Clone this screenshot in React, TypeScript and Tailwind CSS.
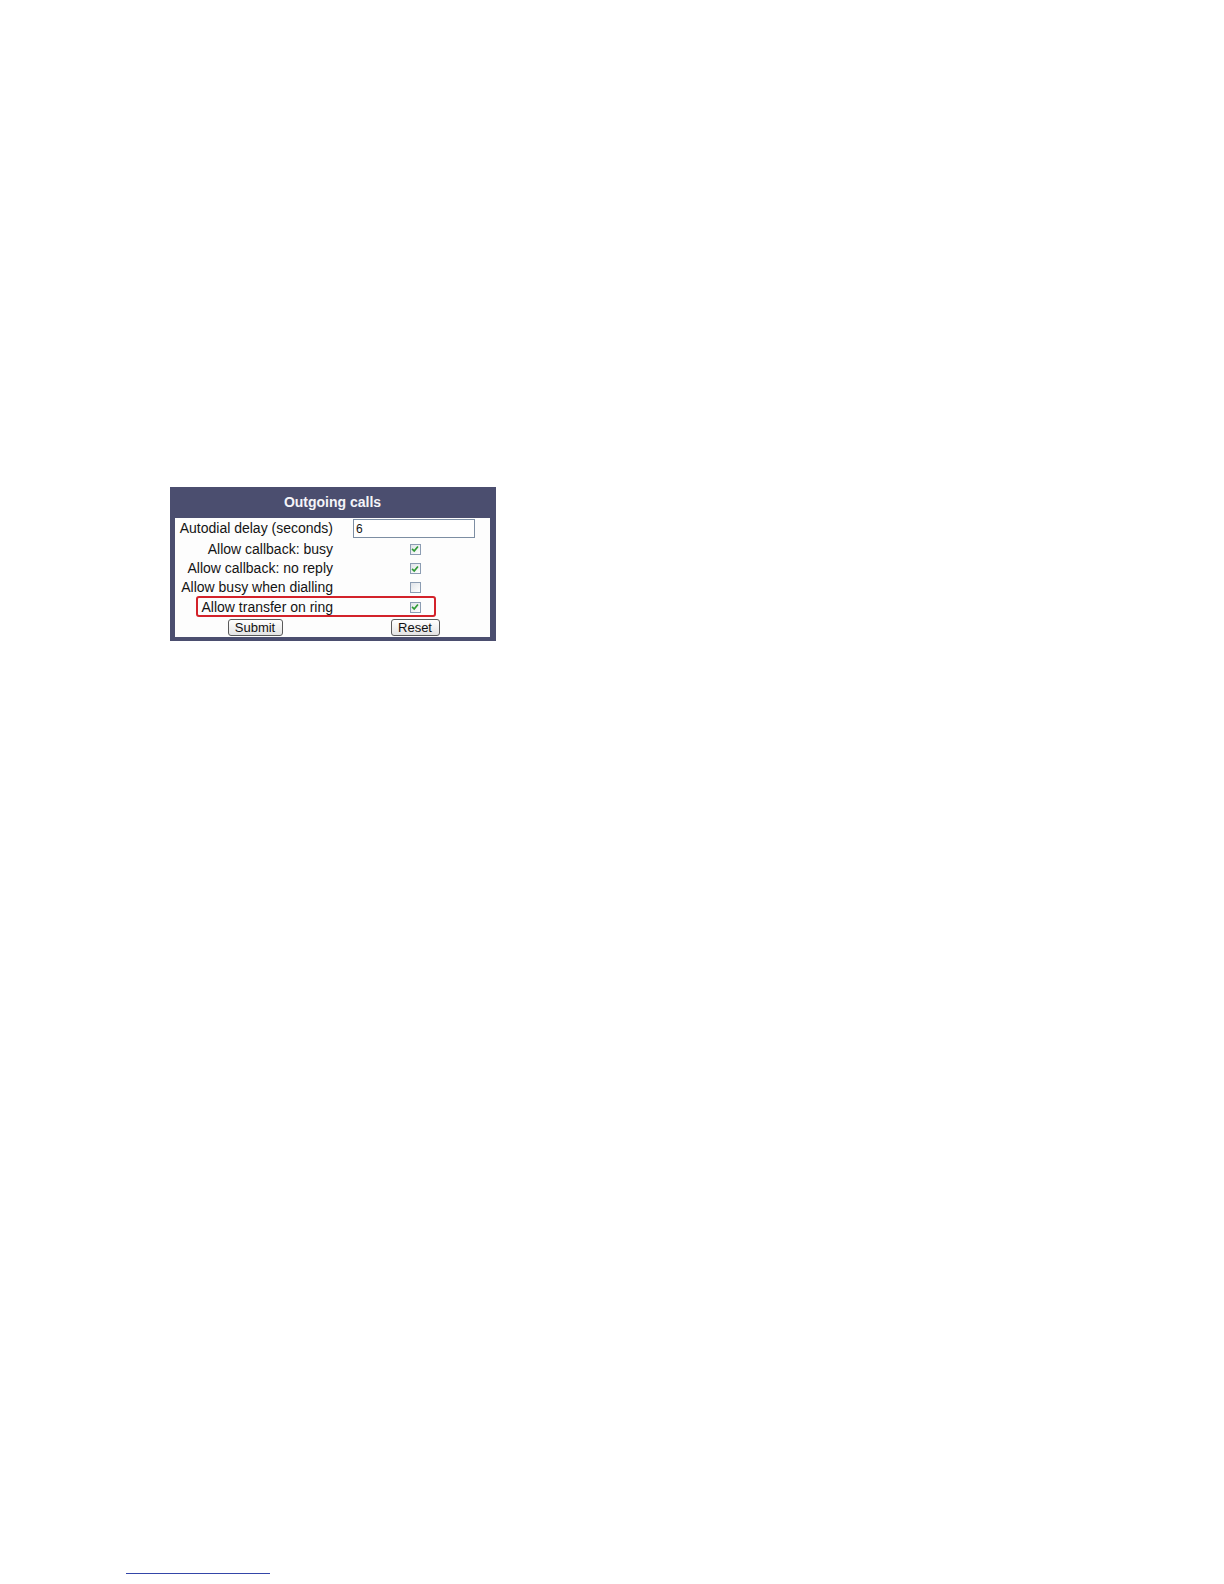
import React from 'react'

const font = { fontFamily: '"Liberation Sans", Arial, sans-serif' }

function Check({ checked }: { checked: boolean }) {
  return (
    <span className="flex h-[11px] w-[11px] items-center justify-center border border-[#8c9db3] bg-gradient-to-br from-[#dfe3e8] to-white">
      {checked && (
        <svg viewBox="0 0 9 9" className="h-[8px] w-[8px]">
          <path d="M1.2 4.4 L3.6 6.8 L7.8 1.6" fill="none" stroke="#2f9a35" strokeWidth="1.9" />
        </svg>
      )}
    </span>
  )
}

function Button({ children, w }: { children: React.ReactNode; w: string }) {
  return (
    <button
      className={`${w} h-[17px] rounded-[3px] border border-[#5a5a5a] bg-gradient-to-b from-white to-[#e4e4e4] text-[13px] leading-[15px] text-[#111]`}
      style={font}
    >
      {children}
    </button>
  )
}

const rows: { label: string; checked: boolean; h: string }[] = [
  { label: 'Allow callback: busy', checked: true, h: 'h-[20px]' },
  { label: 'Allow callback: no reply', checked: true, h: 'h-[19px]' },
  { label: 'Allow busy when dialling', checked: false, h: 'h-[19px]' },
  { label: 'Allow transfer on ring', checked: true, h: 'h-[20px]' }
]

export default function App() {
  return (
    <div className="h-[1584px] overflow-hidden bg-white pl-[170px] pt-[487px]" style={font}>
      <div className="w-[326px] bg-[#4b4e6f] pb-[4px] pl-[5px] pr-[6px]">
        <div className="flex h-[31px] items-center justify-center text-[14px] font-bold text-[#f4f4f8]">
          Outgoing calls
        </div>
        <div className="relative bg-[#fdfdfd] text-[14px] text-[#141414]">
          <div className="flex h-[21px] items-center">
            <div className="w-[167px] pr-[9px] text-right">Autodial delay (seconds)</div>
            <div className="ml-[11px] flex h-[19px] w-[122px] items-center border border-[#7d8ea3] bg-white pl-[2px] text-[12px]">
              6
            </div>
          </div>
          {rows.map((r) => (
            <div key={r.label} className={`flex ${r.h} items-center`}>
              <div className="w-[167px] pr-[9px] text-right">{r.label}</div>
              <div className="flex w-[146px] justify-center">
                <Check checked={r.checked} />
              </div>
            </div>
          ))}
          <div className="flex h-[20px] items-center">
            <div className="flex w-[167px] justify-center pr-[7px]">
              <Button w="w-[55px]">Submit</Button>
            </div>
            <div className="flex w-[146px] justify-center">
              <Button w="w-[49px]">Reset</Button>
            </div>
          </div>
          <div className="pointer-events-none absolute left-[21px] top-[78px] h-[21px] w-[240px] rounded-[3px] border-2 border-[#d3222a]" />
        </div>
      </div>
      <div className="mt-[932px] ml-[-44px] h-px w-[144px] bg-[#3446a8]" />
    </div>
  )
}
